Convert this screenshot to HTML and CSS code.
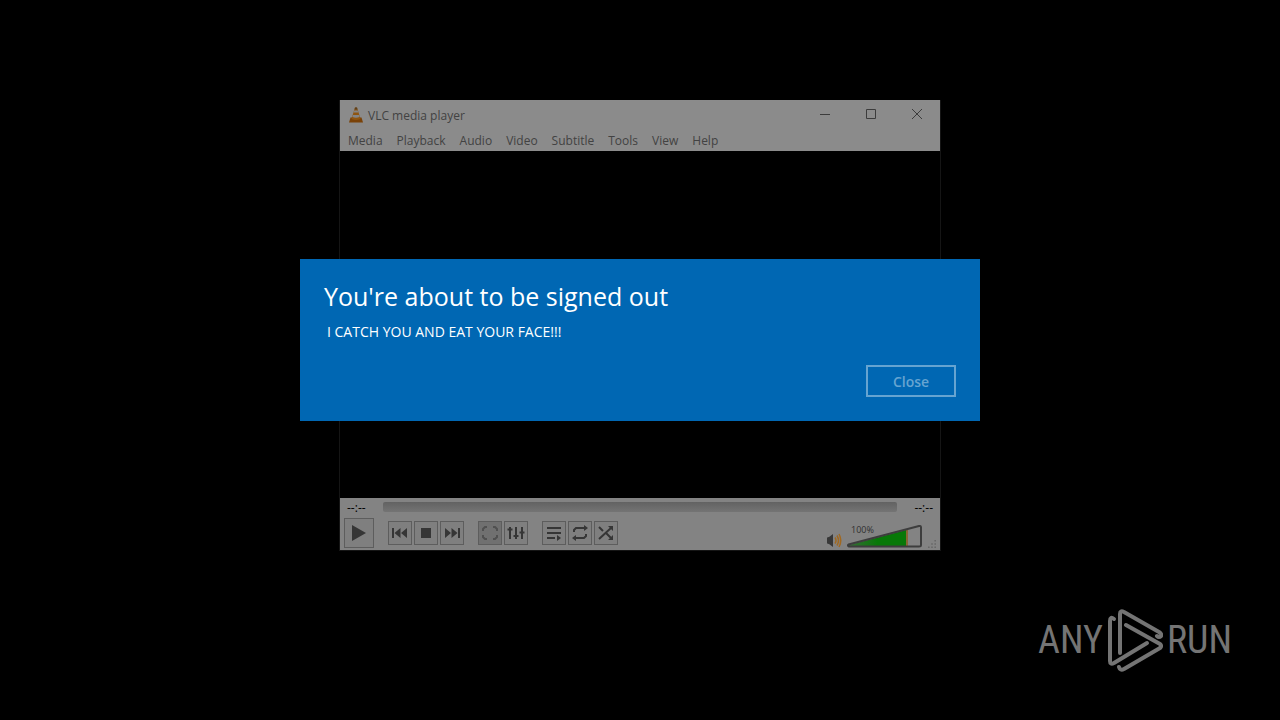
FILE: index.html
```html
<!DOCTYPE html>
<html lang="en">
<head>
<meta charset="utf-8">
<meta name="viewport" content="width=device-width, initial-scale=1">
<title>VLC media player</title>
<link rel="stylesheet" href="styles.css">
</head>
<body>
<main class="desktop">
  <section class="player" aria-label="VLC media player">
    <header class="titlebar">
      <svg class="cone" viewBox="0 0 16 16" aria-hidden="true">
        <path d="M2.500 10.500h11L15 15.500H1z" fill="#7a4208"/>
        <path d="M7 .5h2L12.500 12q-4.500 2-9 0z" fill="#8f5510"/>
        <path d="M6.300 3.500h3.400l.6 2H5.700zM5 8h6l.6 2q-3.600 1.400-7.200 0z" fill="#858585"/>
        <path d="M7 .5h2l.5 2h-3z" fill="#5a4020"/>
      </svg>
      <span class="title">VLC media player</span>
      <div class="caption">
        <button aria-label="Minimize"><svg viewBox="0 0 12 12"><path d="M1 6.500h10"/></svg></button>
        <button aria-label="Maximize"><svg viewBox="0 0 12 12"><path d="M1.500 1.500h9v9h-9z"/></svg></button>
        <button aria-label="Close window"><svg viewBox="0 0 12 12"><path d="M1 1l10 10M11 1L1 11"/></svg></button>
      </div>
    </header>
    <nav class="menu">
      <button>Media</button><button>Playback</button><button>Audio</button><button>Video</button><button>Subtitle</button><button>Tools</button><button>View</button><button>Help</button>
    </nav>
    <div class="video"></div>
    <footer class="controls">
      <div class="seek">
        <span class="time">--:--</span>
        <div class="track"></div>
        <span class="time">--:--</span>
      </div>
      <div class="bar">
        <button class="tool play" aria-label="Play"><svg viewBox="0 0 18 18"><path d="M2 1l14 8-14 8z"/></svg></button>
        <div class="group">
          <button class="tool" aria-label="Previous"><svg viewBox="0 0 18 18"><path d="M1 4h2v10H1zM9.500 4v10L3.500 9zM16 4v10l-6-5z"/></svg></button>
          <button class="tool" aria-label="Stop"><svg viewBox="0 0 18 18"><path d="M4 4h10v10H4z"/></svg></button>
          <button class="tool" aria-label="Next"><svg viewBox="0 0 18 18"><path d="M17 4h-2v10h2zM8.500 4v10l6-5zM2 4v10l6-5z"/></svg></button>
        </div>
        <div class="group">
          <button class="tool off" aria-label="Fullscreen"><svg class="line" viewBox="0 0 18 18"><path d="M2 7V5l2-2h2M12 3h2l2 2v2M16 11v2l-2 2h-2M6 15H4l-2-2v-2"/></svg></button>
          <button class="tool" aria-label="Extended settings"><svg class="line" viewBox="0 0 18 18"><path d="M3 3v12M9 3v12M15 3v12M.5 5.500h5M6.500 12h5M12.500 8.500h5"/></svg></button>
        </div>
        <div class="group">
          <button class="tool" aria-label="Playlist"><svg class="line" viewBox="0 0 18 18"><path d="M2 4h14M2 9h14M2 14h8"/><path class="fill" d="M12 11l4 3-4 3z"/></svg></button>
          <button class="tool" aria-label="Loop"><svg class="line" viewBox="0 0 18 18"><path d="M3 8V6l2-2h9M15 10v2l-2 2H4"/><path class="fill" d="M13 1l4 3-4 3zM5 11l-4 3 4 3z"/></svg></button>
          <button class="tool" aria-label="Random"><svg class="line" viewBox="0 0 18 18"><path d="M2 15L14 4M2 3l4 4M9 9l5 5"/><path class="fill" d="M11 2h5v5zM16 11v5h-5z"/></svg></button>
        </div>
        <div class="volume">
          <svg class="speaker" viewBox="0 0 16 16" aria-hidden="true">
            <path d="M1 6q0-1 2-1l4-3v13l-4-3q-2 0-2-1z" fill="#383838"/>
            <path d="M9 5.500q2 3 0 6M11 3.500q3 5 0 10M13 2q3.500 6.500 0 13" fill="none" stroke="#a06820" stroke-width="1.500"/>
          </svg>
          <div class="level">
            <svg viewBox="0 0 76 24" role="img" aria-label="Volume 100%">
              <defs><linearGradient id="v"><stop offset="0" stop-color="#376c37"/><stop offset=".5" stop-color="#087808"/><stop offset="1" stop-color="#087808"/></linearGradient></defs>
              <path d="M2 21L59 6v16H2z" fill="url(#v)"/>
              <path d="M59 6l2-1v17h-2z" fill="#8a6535"/>
              <path d="M1.500 20.500L72 2q2-.5 2 1.500V21q0 1.500-2 1.500H2q-2-1-.5-2z" fill="none" stroke="#3d3d3d" stroke-width="2"/>
            </svg>
            <span class="percent">100%</span>
          </div>
          <svg class="grip" viewBox="0 0 10 10" aria-hidden="true"><path d="M8 0h2v2H8zM4 4h2v2H4zM8 4h2v2H8zM0 8h2v2H0zM4 8h2v2H4zM8 8h2v2H8z" fill="#686868"/></svg>
        </div>
      </div>
    </footer>
  </section>

  <section class="dialog" role="dialog" aria-labelledby="heading">
    <h1 id="heading">You're about to be signed out</h1>
    <p>I CATCH YOU AND EAT YOUR FACE!!!</p>
    <button class="close">Close</button>
  </section>

  <div class="watermark">
    <span>ANY</span>
    <svg viewBox="0 0 56 64" aria-hidden="true">
      <path d="M7 11Q3 8 3 13v40q0 4 4 2l33-20"/>
      <path d="M13 45V6q0-4 4-2l35 20q3 2 2 4-2 2-4 0"/>
      <path d="M19 17l34 19q2 2 0 4L17 61q-4 2-5-2"/>
    </svg>
    <span>RUN</span>
  </div>
</main>
</body>
</html>
```
FILE: styles.css
```css
* { box-sizing: border-box; }
body {
  margin: 0;
  background: #000;
  font-family: "Open Sans", "Noto Sans", sans-serif;
}
button {
  margin: 0;
  padding: 0;
  border: 0;
  background: none;
  color: inherit;
  font: inherit;
}
svg { display: block; }
.desktop {
  position: relative;
  min-height: 100vh;
  padding: 100px 16px;
}
.player {
  max-width: 602px;
  margin: 0 auto;
  border: 1px solid #151515;
  border-top: 0;
  background: #8b8b8b;
  color: #424242;
  font-size: 12px;
}
.titlebar {
  display: flex;
  align-items: center;
  height: 30px;
  padding-left: 8px;
}
.cone { width: 16px; height: 16px; margin-right: 4px; }
.caption { display: flex; margin-left: auto; }
.caption button {
  display: grid;
  place-items: center;
  width: 46px;
  height: 30px;
  padding-bottom: 2px;
}
.caption svg {
  width: 12px;
  height: 12px;
  fill: none;
  stroke: #3c3c3c;
}
.menu {
  display: flex;
  gap: 14px;
  height: 21px;
  padding: 0 8px;
  line-height: 21px;
}
.video { height: 347px; background: #000; }
.controls { padding: 1px 4px; background: #838383; }
.seek {
  display: flex;
  align-items: center;
  gap: 14px;
  height: 17px;
  padding: 0 3px;
}
.time { width: 22px; color: #000; line-height: 16px; }
.time:last-child { text-align: right; }
.track {
  flex: 1;
  height: 10px;
  margin-bottom: 2px;
  border-radius: 2px;
  background: linear-gradient(#626262, #747474);
}
.bar {
  display: flex;
  align-items: center;
  gap: 14px;
  height: 33px;
}
.group { display: flex; gap: 2px; }
.tool {
  display: grid;
  place-items: center;
  width: 24px;
  height: 24px;
  border: 1px solid #5d5d5d;
  background: #7f7f7f;
}
.tool svg { width: 18px; height: 18px; fill: #363636; }
.tool .line { fill: none; stroke: #363636; stroke-width: 2; }
.tool .fill { fill: #363636; stroke: none; }
.play { width: 30px; height: 30px; }
.off { background: #707070; }
.tool.off .line { stroke: #505050; }
.volume {
  display: flex;
  align-items: flex-end;
  gap: 5px;
  height: 30px;
  margin-left: auto;
}
.speaker { width: 16px; height: 16px; }
.level { position: relative; }
.level svg { width: 76px; height: 24px; }
.percent {
  position: absolute;
  top: 0;
  left: 4px;
  color: #303030;
  font-size: 9px;
  line-height: 12px;
}
.grip { width: 8px; height: 8px; }
.dialog {
  position: absolute;
  top: 259px;
  left: 50%;
  display: flex;
  flex-direction: column;
  width: 680px;
  max-width: 100%;
  padding: 20px 24px 24px;
  background: #0067b3;
  color: #fff;
  transform: translateX(-50%);
}
.dialog h1 {
  margin: 0;
  font-size: 25px;
  font-weight: 400;
  line-height: 34px;
}
.dialog p {
  margin: 9px 3px 23px;
  font-size: 14px;
  line-height: 20px;
}
.close {
  align-self: flex-end;
  width: 90px;
  height: 32px;
  border: 2px solid #66a4d1;
  color: #66a4d1;
  font-size: 14px;
  font-weight: 600;
}
.watermark {
  position: absolute;
  right: 48px;
  bottom: 48px;
  display: flex;
  align-items: center;
  gap: 4px;
  color: #747474;
  font-family: "Roboto Condensed", "Open Sans Condensed", "Liberation Sans Narrow", Roboto, sans-serif;
  font-size: 38px;
  line-height: 64px;
}
.watermark svg {
  width: 56px;
  height: 64px;
  fill: none;
  stroke: #747474;
  stroke-width: 4;
  stroke-linecap: round;
  stroke-linejoin: round;
}
```
